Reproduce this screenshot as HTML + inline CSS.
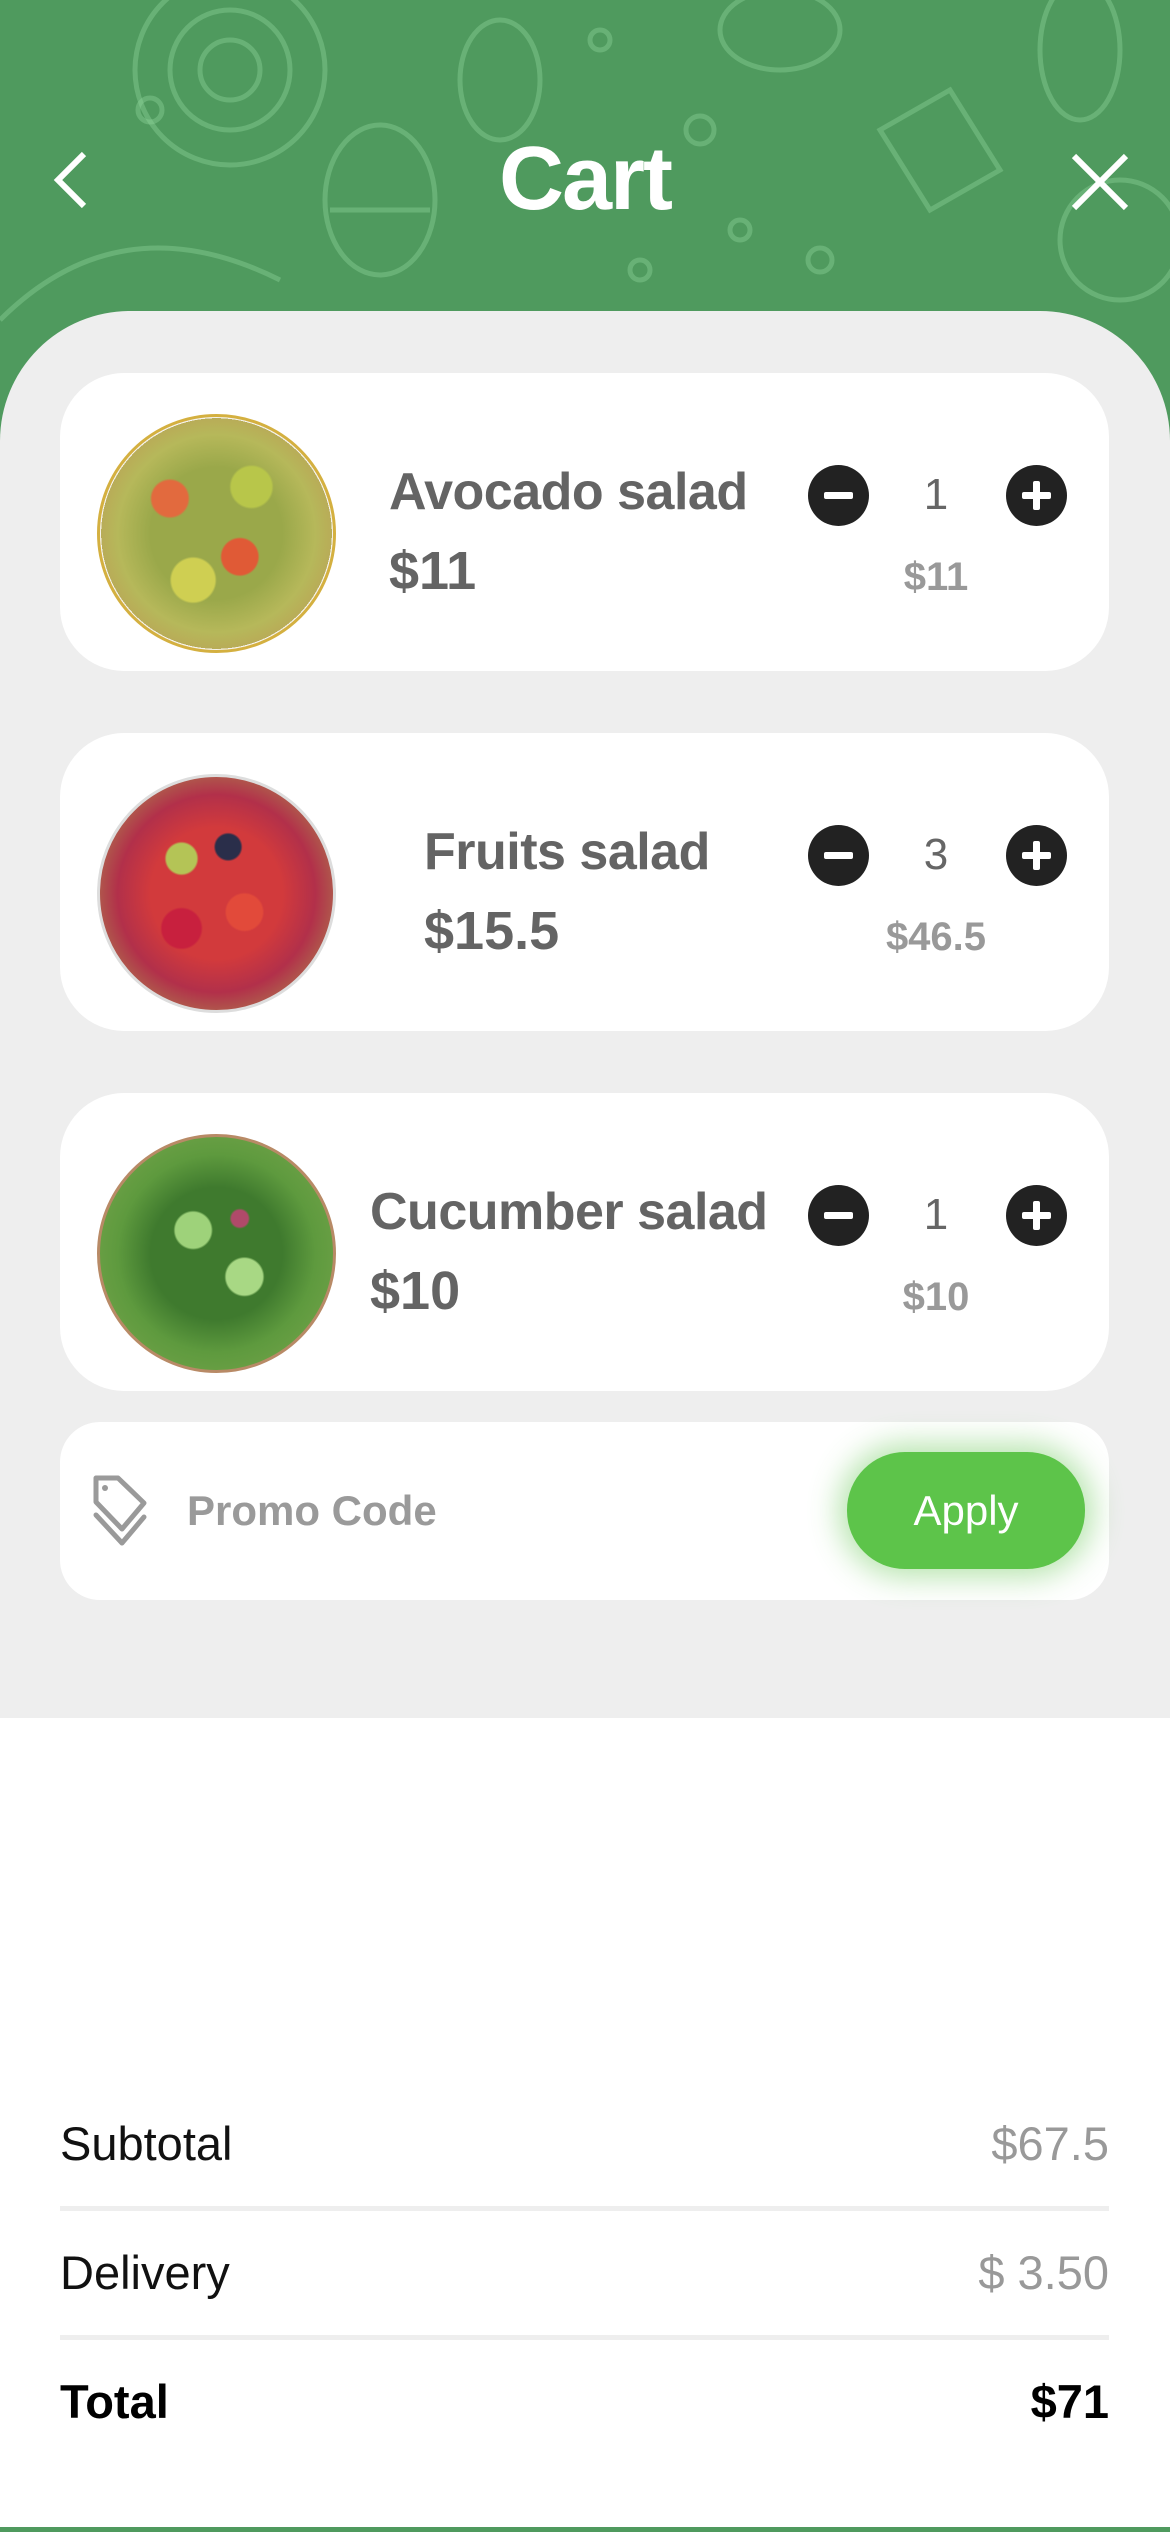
<!DOCTYPE html>
<html><head><meta charset="utf-8">
<style>
*{margin:0;padding:0;box-sizing:border-box}
body{width:1170px;height:2532px;position:relative;overflow:hidden;background:#fff;font-family:"Liberation Sans",sans-serif}
.hdr{position:absolute;left:0;top:0;width:1170px;height:480px;background:#4f9a5e}
.title{position:absolute;left:0;width:1170px;top:128px;text-align:center;color:#fff;font-size:90px;font-weight:bold;letter-spacing:-2px}
.panel{position:absolute;left:0;top:311px;width:1170px;height:1407px;background:#eeeeee;border-radius:130px 130px 0 0}
.card{position:absolute;left:60px;width:1049px;height:298px;background:#fff;border-radius:64px}
.bowl{position:absolute;left:97px;width:239px;height:239px;border-radius:50%}
.name{position:absolute;font-size:52px;color:#646464;font-weight:bold;letter-spacing:-0.5px}
.price{position:absolute;font-size:54px;color:#646464;font-weight:bold}
.btn{position:absolute;width:61px;height:61px;border-radius:50%;background:#222}
.btn:before{content:"";position:absolute;left:16px;top:27px;width:29px;height:7px;background:#fff;border-radius:2px}
.btn.p:after{content:"";position:absolute;left:27px;top:16px;width:7px;height:29px;background:#fff;border-radius:2px}
.qty{position:absolute;width:80px;text-align:center;font-size:44px;color:#666}
.sub{position:absolute;width:160px;text-align:center;font-size:40px;color:#999;font-weight:bold}
.row{position:absolute;left:60px;width:1049px;font-size:47px;color:#111}
.row span{position:absolute;right:0;color:#999}
.div{position:absolute;left:60px;width:1049px;height:5px;background:#eee}
</style></head><body>
<div class="hdr">
<svg width="1170" height="480" style="position:absolute;left:0;top:0" fill="none" stroke="#8fd49a" stroke-opacity=".4" stroke-width="5">
<circle cx="230" cy="70" r="95"/><circle cx="230" cy="70" r="60"/><circle cx="230" cy="70" r="30"/>
<ellipse cx="380" cy="200" rx="55" ry="75"/><path d="M330 210h100"/>
<ellipse cx="500" cy="80" rx="40" ry="60"/><path d="M880 130l70 -40l50 80l-70 40z"/>
<ellipse cx="1080" cy="50" rx="40" ry="70"/><circle cx="1120" cy="240" r="60"/>
<ellipse cx="780" cy="30" rx="60" ry="40"/><path d="M0 320q120 -120 280 -40"/><path d="M20 380q100 -80 250 -20"/>
<circle cx="700" cy="130" r="14"/><circle cx="640" cy="270" r="10"/><circle cx="740" cy="230" r="10"/><circle cx="150" cy="110" r="12"/><circle cx="600" cy="40" r="10"/><circle cx="820" cy="260" r="12"/>
</svg>
<svg style="position:absolute;left:48px;top:150px" width="44" height="60" viewBox="0 0 44 60"><path d="M36 4L10 30L36 56" stroke="#fff" stroke-width="6" fill="none"/></svg>
<svg style="position:absolute;left:1068px;top:150px" width="64" height="64" viewBox="0 0 64 64"><path d="M6 6L58 58M58 6L6 58" stroke="#fff" stroke-width="6"/></svg>
<div class="title">Cart</div>
</div>
<div class="panel"></div>

<div class="card" style="top:373px"></div>
<div class="bowl" style="top:414px;border:3px solid #d4b040;background:radial-gradient(circle,transparent 0 70%,#f5f3ee 70% 100%),radial-gradient(circle at 30% 35%,#e26a3e 0 8%,transparent 9%),radial-gradient(circle at 60% 60%,#e05a36 0 9%,transparent 10%),radial-gradient(circle at 65% 30%,#b8c64a 0 9%,transparent 10%),radial-gradient(circle at 40% 70%,#cfcf52 0 10%,transparent 11%),radial-gradient(circle,#9aa84a 0 40%,#b6b85a 60%,#c08850 100%)"></div>
<div class="name" style="left:389px;top:462px">Avocado salad</div>
<div class="price" style="left:389px;top:540px">$11</div>
<div class="btn" style="left:808px;top:465px"></div>
<div class="qty" style="left:896px;top:470px">1</div>
<div class="btn p" style="left:1006px;top:465px"></div>
<div class="sub" style="left:856px;top:555px">$11</div>

<div class="card" style="top:733px"></div>
<div class="bowl" style="top:774px;border:3px solid #ddd;background:radial-gradient(circle,transparent 0 72%,#e8e8ec 72% 100%),radial-gradient(circle at 35% 35%,#b4c456 0 7%,transparent 8%),radial-gradient(circle at 62% 58%,#e24a3a 0 9%,transparent 10%),radial-gradient(circle at 55% 30%,#2a2e4a 0 6%,transparent 7%),radial-gradient(circle at 35% 65%,#c8203e 0 9%,transparent 10%),radial-gradient(circle,#d23a3c 0 40%,#b2304a 60%,#a8b850 100%)"></div>
<div class="name" style="left:424px;top:822px">Fruits salad</div>
<div class="price" style="left:424px;top:900px">$15.5</div>
<div class="btn" style="left:808px;top:825px"></div>
<div class="qty" style="left:896px;top:830px">3</div>
<div class="btn p" style="left:1006px;top:825px"></div>
<div class="sub" style="left:856px;top:915px">$46.5</div>

<div class="card" style="top:1093px"></div>
<div class="bowl" style="top:1134px;border:3px solid #b88a66;background:radial-gradient(circle,transparent 0 72%,#f2efe6 72% 100%),radial-gradient(circle at 40% 40%,#9ed27a 0 9%,transparent 10%),radial-gradient(circle at 62% 60%,#a8d884 0 9%,transparent 10%),radial-gradient(circle at 60% 35%,#b04a6a 0 4%,transparent 5%),radial-gradient(circle,#3f7a2e 0 40%,#5e9a3e 60%,#7ea850 100%)"></div>
<div class="name" style="left:370px;top:1182px">Cucumber salad</div>
<div class="price" style="left:370px;top:1260px">$10</div>
<div class="btn" style="left:808px;top:1185px"></div>
<div class="qty" style="left:896px;top:1190px">1</div>
<div class="btn p" style="left:1006px;top:1185px"></div>
<div class="sub" style="left:856px;top:1275px">$10</div>

<div style="position:absolute;left:60px;top:1422px;width:1049px;height:178px;background:#fff;border-radius:40px"></div>
<svg style="position:absolute;left:92px;top:1475px" width="56" height="72" viewBox="0 0 56 72" fill="none" stroke="#9a9a9a" stroke-width="5" stroke-linejoin="round" stroke-linecap="round"><path d="M4 3H26L52 28L30 54L4 27Z"/><path d="M4 40L30 68L52 42"/><circle cx="13" cy="13" r="3" fill="#9a9a9a" stroke="none"/></svg>
<div style="position:absolute;left:187px;top:1487px;font-size:42px;font-weight:bold;color:#9a9a9a">Promo Code</div>
<div style="position:absolute;left:847px;top:1452px;width:238px;height:117px;border-radius:58px;background:#5dc44a;box-shadow:0 0 30px 8px rgba(93,196,74,.45);color:#fff;font-size:42px;text-align:center;line-height:117px">Apply</div>

<div class="row" style="top:2116px">Subtotal<span>$67.5</span></div>
<div class="div" style="top:2206px"></div>
<div class="row" style="top:2245px">Delivery<span>$ 3.50</span></div>
<div class="div" style="top:2335px"></div>
<div class="row" style="top:2374px;font-weight:bold;color:#000">Total<span style="color:#000">$71</span></div>
<div style="position:absolute;left:0;top:2527px;width:1170px;height:5px;background:#4f9a5e"></div>
</body></html>
